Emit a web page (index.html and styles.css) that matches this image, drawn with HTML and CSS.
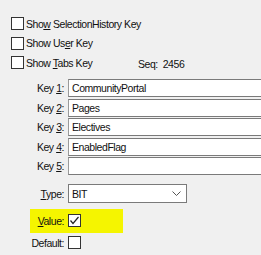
FILE: index.html
```html
<!DOCTYPE html>
<html lang="en">
<head>
    <meta charset="UTF-8">
    <title>Key Options</title>
    <link rel="stylesheet" href="styles.css">
</head>
<body>

<div class="options">
    <div class="check-row">
        <span class="box"></span>
        <span class="check-text">Sho<u>w</u> SelectionHistory Key</span>
    </div>
    <div class="check-row">
        <span class="box"></span>
        <span class="check-text">Show Us<u>e</u>r Key</span>
    </div>
    <div class="check-row">
        <span class="box"></span>
        <span class="check-text tabs">Show <u>T</u>abs Key</span>
        <span class="seq">Seq:&nbsp;&nbsp;2456</span>
    </div>
</div>

<div class="fields">
    <div class="row">
        <label>Key <u>1</u>:</label>
        <div class="text-input">CommunityPortal</div>
    </div>
    <div class="row">
        <label>Key <u>2</u>:</label>
        <div class="text-input">Pages</div>
    </div>
    <div class="row">
        <label>Key <u>3</u>:</label>
        <div class="text-input">Electives</div>
    </div>
    <div class="row">
        <label>Key <u>4</u>:</label>
        <div class="text-input">EnabledFlag</div>
    </div>
    <div class="row">
        <label>Key <u>5</u>:</label>
        <div class="text-input"></div>
    </div>

    <div class="row type-row">
        <label><u>T</u>ype:</label>
        <div class="select-box">
            <span>BIT</span>
            <!-- panah dropdown -->
            <svg class="chevron" width="9" height="5" viewBox="0 0 9 5">
                <path d="M0.5 0.5 L4.5 4.5 L8.5 0.5" fill="none" stroke="#555" stroke-width="1"/>
            </svg>
        </div>
    </div>

    <div class="row highlight">
        <label><u>V</u>alue:</label>
        <span class="box checked">
            <svg width="11" height="11" viewBox="0 0 11 11">
                <path d="M1.5 5.5 L4 8.5 L9.5 2" fill="none" stroke="#222" stroke-width="1.2"/>
            </svg>
        </span>
    </div>

    <div class="row default-row">
        <label>Default:</label>
        <span class="box"></span>
    </div>
</div>

</body>
</html>
```

FILE: styles.css
```css
body {
    font-family: "Liberation Sans", Arial, sans-serif;
    font-size: 10.5px;
    letter-spacing: -0.45px;
    color: #111;
    margin: 0;
    padding: 0;
    background-color: #f0f0f0;
    width: 261px;
    height: 255px;
    overflow: hidden;
}
u {
    text-decoration: underline;
    text-underline-offset: 1px;
}
.options {
    padding-top: 14px;
    padding-left: 11px;
}
.check-row {
    display: flex;
    align-items: center;
    height: 19.5px;
}
.box {
    box-sizing: border-box;
    width: 13px;
    height: 13px;
    border: 1px solid #333;
    background-color: #fff;
    flex-shrink: 0;
}
.check-text {
    margin-left: 2px;
}
.check-text.tabs {
    width: 112px;
}
.seq {
    padding-top: 3px;
}
.fields {
    margin-top: 6px;
}
.row {
    display: flex;
    align-items: center;
    height: 19.5px;
}
.row label {
    width: 64px;
    text-align: right;
    margin-right: 4px;
    flex-shrink: 0;
}
.text-input {
    box-sizing: border-box;
    width: 200px;
    height: 18px;
    line-height: 16px;
    padding-left: 3px;
    background-color: #fff;
    border: 1px solid #7a7a7a;
    border-left-color: #9a9a9a;
    flex-shrink: 0;
}
.type-row {
    margin-top: 8px;
}
.select-box {
    box-sizing: border-box;
    width: 119px;
    height: 19px;
    padding-left: 3px;
    padding-right: 5px;
    background-color: #fff;
    border: 1px solid #7a7a7a;
    display: flex;
    align-items: center;
    justify-content: space-between;
}
.chevron {
    display: block;
}
.highlight {
    margin-top: 5px;
    margin-left: 30px;
    width: 93px;
    height: 24px;
    background-color: #f5f500;
}
.highlight label {
    width: 34px;
}
.box.checked {
    display: flex;
    align-items: center;
    justify-content: center;
}
.box.checked svg {
    display: block;
}
.default-row {
    height: 16px;
    margin-top: 2px;
}
```
